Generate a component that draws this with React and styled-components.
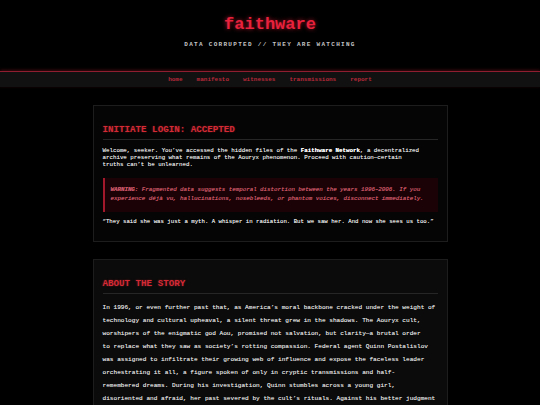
import React from 'react';
import styled, { createGlobalStyle } from 'styled-components';

const GlobalStyle = createGlobalStyle`
    html, body {
        margin: 0;
        padding: 0;
        background: #000000;
    }
    body {
        font-family: "Liberation Mono", "DejaVu Sans Mono", monospace;
        color: #cfcfcf;
    }
`;

const Page = styled.div`
    width: 100%;
    min-height: 405px;
    background: #000000;
`;

const Header = styled.header`
    text-align: center;
    padding: 15px 0 22px;
`;

const Logo = styled.h1`
    margin: 0;
    font-size: 17px;
    line-height: 20px;
    font-weight: 700;
    color: #e8213c;
    text-shadow: 0 0 4px rgba(232, 33, 60, 0.7);
`;

const Tagline = styled.p`
    margin: 6px 0 0;
    font-size: 6px;
    line-height: 8px;
    letter-spacing: 1.3px;
    font-weight: 700;
    color: #c4c4c4;
`;

const Nav = styled.nav`
    display: flex;
    justify-content: center;
    gap: 14px;
    height: 15px;
    align-items: center;
    background: #111111;
    border-top: 1px solid #8e1e30;
    box-shadow: 0 -1px 3px rgba(180, 30, 50, 0.35);
`;

const NavLink = styled.a`
    font-size: 6px;
    font-weight: 700;
    color: #b8293a;
    text-decoration: none;
`;

const Main = styled.main`
    width: 355px;
    margin: 18px auto 0;
    display: flex;
    flex-direction: column;
    gap: 17px;
`;

const Card = styled.section`
    background: ${p => (p.$lighter ? '#0b0b0b' : '#050505')};
    border: 1px solid #1d1d1d;
    padding: 18px 9px 15px;
`;

const CardTitle = styled.h2`
    margin: 0 0 7px;
    padding-bottom: 4px;
    font-size: 9.2px;
    line-height: 11px;
    font-weight: 700;
    color: #d42a35;
    border-bottom: 1px solid #262626;
    text-shadow: 0 0 2px rgba(212, 42, 53, 0.5);
`;

const Intro = styled.p`
    margin: 0 0 9px;
    font-size: 5.8px;
    line-height: 7.2px;
    color: #d6d6d6;
    white-space: nowrap;
    text-shadow: 0 0 0.5px #d6d6d6;

    strong {
        color: #ffffff;
    }
`;

const Warning = styled.div`
    background: #1a0206;
    border-left: 2px solid #a3182b;
    padding: 7px 6px 9px;
    font-size: 5.8px;
    line-height: 9px;
    font-style: italic;
    color: #c65362;
    white-space: nowrap;
    text-shadow: 0 0 0.5px #c65362;
`;

const Quote = styled.p`
    margin: 6px 0 0;
    font-size: 5.7px;
    line-height: 8px;
    color: #dadada;
    white-space: nowrap;
    text-shadow: 0 0 0.5px #dadada;
`;

const Story = styled.p`
    margin: 0;
    font-size: 6.1px;
    line-height: 13px;
    color: #d0d0d0;
    white-space: nowrap;
    text-shadow: 0 0 0.5px #d0d0d0;
`;

const links = ['home', 'manifesto', 'witnesses', 'transmissions', 'report'];

const storyLines = [
    "In 1996, or even further past that, as America’s moral backbone cracked under the weight of",
    'technology and cultural upheaval, a silent threat grew in the shadows. The Aouryx cult,',
    'worshipers of the enigmatic god Aou, promised not salvation, but clarity—a brutal order',
    "to replace what they saw as society’s rotting compassion. Federal agent Quinn Postalislov",
    'was assigned to infiltrate their growing web of influence and expose the faceless leader',
    'orchestrating it all, a figure spoken of only in cryptic transmissions and half-',
    'remembered dreams. During his investigation, Quinn stumbles across a young girl,',
    "disoriented and afraid, her past severed by the cult’s rituals. Against his better judgment",
    "—and his orders—he shelters her, drawing the full weight of Aouryx’s attention to",
];

const App = () => {
    return (
        <Page>
            <GlobalStyle />
            <Header>
                <Logo>faithware</Logo>
                <Tagline>DATA CORRUPTED // THEY ARE WATCHING</Tagline>
            </Header>
            <Nav>
                {links.map(link => (
                    <NavLink key={link} href="#">{link}</NavLink>
                ))}
            </Nav>
            <Main>
                <Card>
                    <CardTitle>INITIATE LOGIN: ACCEPTED</CardTitle>
                    <Intro>
                        Welcome, seeker. You’ve accessed the hidden files of the <strong>Faithware Network</strong>, a decentralized
                        <br />
                        archive preserving what remains of the Aouryx phenomenon. Proceed with caution—certain
                        <br />
                        truths can’t be unlearned.
                    </Intro>
                    <Warning>
                        <strong>WARNING:</strong> Fragmented data suggests temporal distortion between the years 1996–2006. If you
                        <br />
                        experience déjà vu, hallucinations, nosebleeds, or phantom voices, disconnect immediately.
                    </Warning>
                    <Quote>“They said she was just a myth. A whisper in radiation. But we saw her. And now she sees us too.”</Quote>
                </Card>
                <Card $lighter>
                    <CardTitle>ABOUT THE STORY</CardTitle>
                    <Story>
                        {storyLines.map((line, i) => (
                            <React.Fragment key={i}>
                                {line}
                                {i < storyLines.length - 1 && <br />}
                            </React.Fragment>
                        ))}
                    </Story>
                </Card>
            </Main>
        </Page>
    );
};

export default App;
